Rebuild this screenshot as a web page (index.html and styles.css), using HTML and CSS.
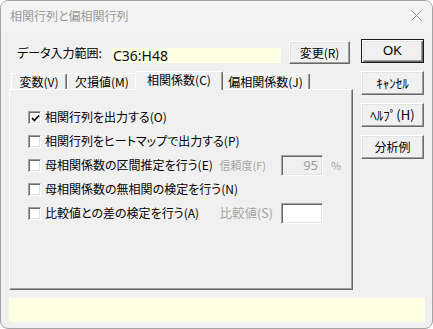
FILE: index.html
```html
<!DOCTYPE html>
<html lang="ja">
<head>
<meta charset="utf-8">
<title>相関行列と偏相関行列</title>
<link rel="stylesheet" href="styles.css">
</head>
<body>
<div class="window">
  <div class="titlebar">
    <span class="title">相関行列と偏相関行列</span>
    <svg class="close" width="11" height="11" viewBox="0 0 11 11"><path d="M0.5 0.5 L10.5 10.5 M10.5 0.5 L0.5 10.5" stroke="#8a8a8a" stroke-width="1" fill="none"/></svg>
  </div>
  <div class="client">
    <div class="main">
      <div class="left">
        <div class="range-row">
          <span class="range-label">データ入力範囲:</span>
          <span class="range-field">C36:H48</span>
          <button class="btn change">変更(R)</button>
        </div>
        <div class="tabs">
          <div class="tab t1">変数(V)</div>
          <div class="tab t2">欠損値(M)</div>
          <div class="tab selected">相関係数(C)</div>
          <div class="tab t4">偏相関係数(J)</div>
        </div>
        <div class="panel">
          <div class="row">
            <span class="cb checked"><svg width="9" height="9" viewBox="0 0 9 9"><path d="M1 4 L3.3 6.5 L8 1.5" stroke="#000" stroke-width="1.7" fill="none"/></svg></span>
            <span class="cb-label">相関行列を出力する(O)</span>
          </div>
          <div class="row">
            <span class="cb"></span>
            <span class="cb-label">相関行列をヒートマップで出力する(P)</span>
          </div>
          <div class="row">
            <span class="cb"></span>
            <span class="cb-label">母相関係数の区間推定を行う(E)</span>
            <span class="sub conf">信頼度(F)</span>
            <span class="edit disabled">95</span>
            <span class="pct">%</span>
          </div>
          <div class="row">
            <span class="cb"></span>
            <span class="cb-label">母相関係数の無相関の検定を行う(N)</span>
          </div>
          <div class="row">
            <span class="cb"></span>
            <span class="cb-label">比較値との差の検定を行う(A)</span>
            <span class="sub cmp">比較値(S)</span>
            <span class="edit"></span>
            <span class="pct"></span>
          </div>
        </div>
      </div>
      <div class="right">
        <button class="btn default">OK</button>
        <button class="btn kana">ｷｬﾝｾﾙ</button>
        <button class="btn kana">ﾍﾙﾌﾟ(H)</button>
        <button class="btn">分析例</button>
      </div>
    </div>
    <div class="status"></div>
  </div>
</div>
</body>
</html>
```

FILE: styles.css
```css
* { box-sizing: border-box; }
html, body { margin: 0; padding: 0; background: #ffffff; }
body {
  font-family: "Noto Sans CJK JP", "Noto Sans", sans-serif;
  font-size: 12px;
  font-feature-settings: "palt";
  color: #000;
}
.window {
  width: 433px;
  height: 329px;
  border: 1px solid #a3a3a3;
  border-radius: 8px;
  background: #f0f0f0;
  overflow: hidden;
}
.titlebar {
  height: 31px;
  background: #f3f3f3;
  display: flex;
  align-items: center;
  justify-content: space-between;
  padding: 0 10px 2px 9px;
}
.title {
  color: #9a9a9a;
  font-size: 12px;
  line-height: 14px;
}
.close { display: block; margin-top: -1px; }
.client {
  padding: 7px 8px 0 8px;
}
.main {
  display: flex;
  gap: 8px;
}
.left {
  width: 344px;
  display: flex;
  flex-direction: column;
}
.range-row {
  margin-top: 2px;
  height: 23px;
  display: flex;
  align-items: center;
  padding-left: 8px;
}
.range-label {
  width: 95px;
  line-height: 14px;
  margin-top: 1px;
}
.range-field {
  width: 169px;
  height: 15px;
  margin-top: 5px;
  background: #ffffe1;
  font-family: "Noto Sans", "Noto Sans CJK JP", sans-serif;
  font-size: 14px;
  line-height: 15px;
  padding-left: 1px;
  color: #0a0a1a;
}
.btn {
  font-family: inherit;
  font-size: 12px;
  font-weight: 400;
  font-feature-settings: "palt";
  color: #000;
  background: #f0f0f0;
  border: 1px solid;
  border-color: #ffffff #696969 #696969 #ffffff;
  box-shadow: inset -1px -1px 0 #a0a0a0, inset 1px 1px 0 #e3e3e3;
  padding: 0;
  margin: 0;
  line-height: 14px;
  display: flex;
  align-items: center;
  justify-content: center;
}
.btn.kana { font-size: 13px; font-feature-settings: normal; }
.change {
  width: 61px;
  height: 23px;
  margin-left: 8px;
}
.tabs {
  margin-top: 7px;
  height: 18px;
  display: flex;
  align-items: flex-end;
  padding-left: 2px;
}
.tab {
  height: 16px;
  border-top: 1px solid #ffffff;
  border-left: 1px solid #ffffff;
  border-right: 1px solid #696969;
  box-shadow: inset -1px 0 0 #a0a0a0;
  border-radius: 2px 2px 0 0;
  background: #f0f0f0;
  text-align: center;
  line-height: 15px;
  font-size: 12px;
}
.t1 { width: 56px; }
.t2 { width: 70px; }
.t4 { width: 89px; }
.tab.selected {
  width: 88px;
  height: 19px;
  margin: 0 -2px -1px -2px;
  z-index: 1;
  line-height: 16px;
}
.panel {
  height: 201px;
  border-top: 1px solid #ffffff;
  border-left: 1px solid #ffffff;
  border-right: 1px solid #696969;
  border-bottom: 1px solid #696969;
  box-shadow: inset -1px -1px 0 #a0a0a0;
  padding: 15px 7px 0 18px;
}
.row {
  height: 24px;
  display: flex;
  align-items: center;
}
.cb {
  width: 13px;
  height: 13px;
  flex: none;
  background: #ffffff;
  border: 1px solid;
  border-color: #a0a0a0 #ffffff #ffffff #a0a0a0;
  box-shadow: inset 1px 1px 0 #696969, inset -1px -1px 0 #e3e3e3;
  display: flex;
  align-items: center;
  justify-content: center;
  margin-top: 1px;
}
.cb svg { display: block; margin: 1px 0 0 1px; }
.cb-label {
  margin-left: 4px;
  line-height: 14px;
  white-space: nowrap;
}
.sub {
  margin-left: auto;
  color: #a6a6a6;
  white-space: nowrap;
  line-height: 14px;
}
.sub.conf { font-size: 11px; margin-right: 15px; }
.sub.cmp { font-size: 12.5px; margin-right: 8px; }
.edit {
  width: 42px;
  height: 21px;
  flex: none;
  background: #ffffff;
  border: 1px solid;
  border-color: #a0a0a0 #ffffff #ffffff #a0a0a0;
  box-shadow: inset 1px 1px 0 #696969, inset -1px -1px 0 #e3e3e3;
  font-family: "Noto Sans", sans-serif;
  font-size: 13px;
  text-align: right;
  padding-right: 4px;
  line-height: 19px;
  color: #a0a0a0;
}
.edit.disabled { background: #f0f0f0; }
.pct {
  width: 22px;
  flex: none;
  padding-left: 8px;
  color: #a6a6a6;
  font-size: 11px;
  line-height: 14px;
}
.right {
  width: 63px;
  display: flex;
  flex-direction: column;
  gap: 8px;
}
.right .btn {
  width: 63px;
  height: 24px;
}
.btn.default {
  border: 1px solid #1a1a1a;
  box-shadow: inset 1px 1px 0 #ffffff, inset -1px -1px 0 #696969, inset 2px 2px 0 #e3e3e3, inset -2px -2px 0 #a0a0a0;
  font-family: "Liberation Sans", sans-serif;
  font-size: 13px;
  font-weight: 400;
}
.status {
  margin-top: 8px;
  margin-right: -1px;
  height: 24px;
  background: #ffffe1;
}
```
